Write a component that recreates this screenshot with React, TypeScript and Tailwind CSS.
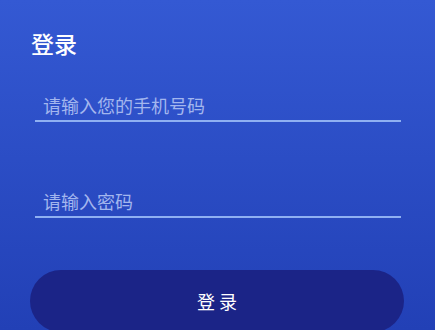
import React from "react";

const font = { fontFamily: '"Noto Sans CJK SC", "Noto Sans", sans-serif' };

export default function App() {
  return (
    <div
      className="h-[330px] w-[435px] overflow-hidden bg-gradient-to-b from-[#3459d3] to-[#2240b6] px-[30px] pt-[27px]"
      style={font}
    >
      <h1 className="pl-px text-[23px] font-medium leading-[32px] text-white">登录</h1>

      <div className="ml-[5px] mr-[4px] mt-[33px] border-b-2 border-[#8fb0f2] pb-[2px] pl-[8px]">
        <input
          className="w-full bg-transparent text-[18px] leading-[26px] text-white placeholder:text-[#a3b6ee] focus:outline-none"
          placeholder="请输入您的手机号码"
        />
      </div>

      <div className="ml-[5px] mr-[4px] mt-[66px] border-b-2 border-[#8fb0f2] pb-[2px] pl-[8px]">
        <input
          type="password"
          className="w-full bg-transparent text-[18px] leading-[26px] text-white placeholder:text-[#a3b6ee] focus:outline-none"
          placeholder="请输入密码"
        />
      </div>

      <button className="mt-[52px] flex h-[62px] w-[374px] items-center justify-center rounded-full bg-[#1b2487] text-[18px] text-white">
        登 录
      </button>
    </div>
  );
}
